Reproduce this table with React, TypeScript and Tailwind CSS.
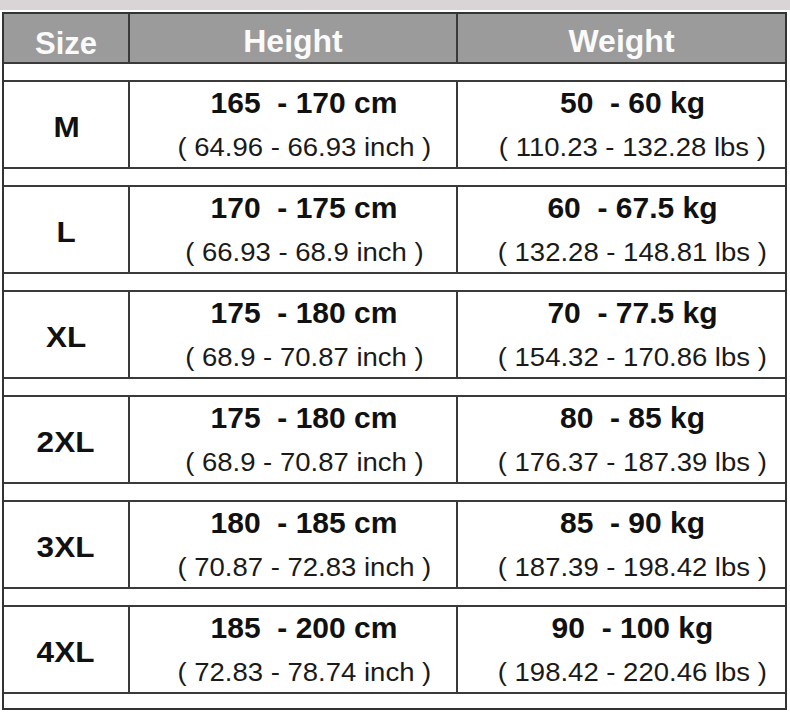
const rows = [
  { size: "M", cm: "165  - 170 cm", inch: "( 64.96 - 66.93 inch )", kg: "50  - 60 kg", lbs: "( 110.23 - 132.28 lbs )" },
  { size: "L", cm: "170  - 175 cm", inch: "( 66.93 - 68.9 inch )", kg: "60  - 67.5 kg", lbs: "( 132.28 - 148.81 lbs )" },
  { size: "XL", cm: "175  - 180 cm", inch: "( 68.9 - 70.87 inch )", kg: "70  - 77.5 kg", lbs: "( 154.32 - 170.86 lbs )" },
  { size: "2XL", cm: "175  - 180 cm", inch: "( 68.9 - 70.87 inch )", kg: "80  - 85 kg", lbs: "( 176.37 - 187.39 lbs )" },
  { size: "3XL", cm: "180  - 185 cm", inch: "( 70.87 - 72.83 inch )", kg: "85  - 90 kg", lbs: "( 187.39 - 198.42 lbs )" },
  { size: "4XL", cm: "185  - 200 cm", inch: "( 72.83 - 78.74 inch )", kg: "90  - 100 kg", lbs: "( 198.42 - 220.46 lbs )" },
];

function ValueCell({ main, sub, last }: { main: string; sub: string; last?: boolean }) {
  return (
    <div
      className={`flex flex-col items-center pt-[4px] pl-[22px] ${
        last ? "" : "border-r-2 border-[#3a3a3a]"
      }`}
    >
      <p className="h-[34px] leading-[34px] text-[30px] font-bold text-[#111] whitespace-pre">
        {main}
      </p>
      <p className="mt-[12px] leading-[30px] text-[25px] text-[#1a1a1a] whitespace-pre scale-x-[1.1]">
        {sub}
      </p>
    </div>
  );
}

export default function App() {
  return (
    <div
      className="w-[790px] h-[715px] bg-white overflow-hidden"
      style={{ fontFamily: '"Liberation Sans", Arial, sans-serif' }}
    >
      <div className="h-[10px] bg-[#d9d4d6]" />
      <div className="mt-[2px] ml-[2px] w-[785px] border-2 border-[#333]">
        {/* header */}
        <div className="grid grid-cols-[126px_328px_1fr] grid-rows-[48px] h-[50px] bg-[#9b9b9b] border-b-2 border-[#3a3a3a]">
          <div className="flex items-center justify-center pt-[12px] border-r-2 border-[#3a3a3a]">
            <p className="leading-[36px] text-[31px] font-bold text-[#fafafa]">Size</p>
          </div>
          <div className="flex items-center justify-center pt-[5px] border-r-2 border-[#3a3a3a]">
            <p className="leading-[36px] text-[32px] font-bold text-[#fafafa]">Height</p>
          </div>
          <div className="flex items-center justify-center pt-[5px]">
            <p className="leading-[36px] text-[32px] font-bold text-[#fafafa]">Weight</p>
          </div>
        </div>
        <div className="h-[18px] border-b-2 border-[#3a3a3a]" />

        {rows.map((r, i) => (
          <div key={r.size}>
            <div className="grid grid-cols-[126px_328px_1fr] grid-rows-[85px] h-[87px] border-b-2 border-[#3a3a3a]">
              <div className="flex items-center justify-center pt-[4px] border-r-2 border-[#3a3a3a]">
                <p className="text-[30px] font-bold text-[#111] scale-x-[1.05]">{r.size}</p>
              </div>
              <ValueCell main={r.cm} sub={r.inch} />
              <ValueCell main={r.kg} sub={r.lbs} last />
            </div>
            <div
              className={`${
                i === rows.length - 1 ? "h-[14px]" : "h-[18px] border-b-2 border-[#3a3a3a]"
              }`}
            />
          </div>
        ))}
      </div>
    </div>
  );
}
